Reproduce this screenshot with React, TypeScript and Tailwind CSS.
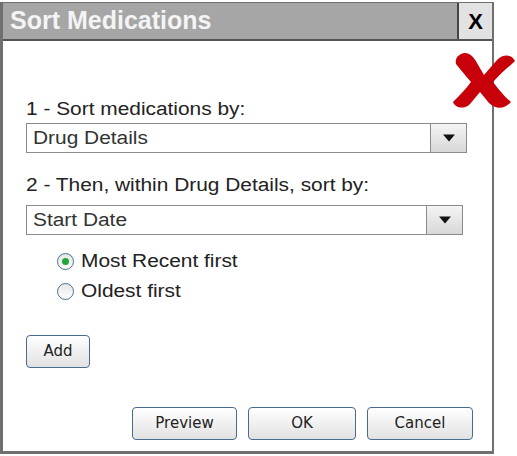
import React from 'react';

const font = { fontFamily: '"Liberation Sans", Arial, sans-serif' };

// the body text in the mock is a slightly widened Arial
const Wide = ({ children }: { children: React.ReactNode }) => (
  <span className="inline-block origin-left scale-x-[1.16] whitespace-nowrap">{children}</span>
);

const Select = ({ value, w }: { value: string; w: string }) => (
  <div className={`flex h-[30px] ${w} border border-[#8a8a8a] bg-white`}>
    <div className="flex flex-1 items-center pl-[6px] text-[18px] text-[#333]">
      <Wide>{value}</Wide>
    </div>
    <div className="flex w-[36px] items-center justify-center border-l border-[#8a8a8a] bg-gradient-to-b from-[#f4f4f4] to-[#d8d8d8]">
      <svg width="14" height="8" viewBox="0 0 14 8">
        <path d="M1 0.5 H13 L7 7.5 Z" fill="#111" />
      </svg>
    </div>
  </div>
);

const Radio = ({ checked, label }: { checked?: boolean; label: string }) => (
  <div className="flex h-[30px] items-center gap-[7px]">
    <div className="flex h-[17px] w-[17px] items-center justify-center rounded-full border border-[#4a6f8c] bg-gradient-to-b from-[#e6e6e6] to-white">
      {checked && <div className="h-[7px] w-[7px] rounded-full bg-[#22a83a]" />}
    </div>
    <span className="text-[18px] text-[#222]">
      <Wide>{label}</Wide>
    </span>
  </div>
);

const Btn = ({ label, w }: { label: string; w: string }) => (
  <button
    className={`${w} h-[33px] shrink-0 rounded-[4px] border border-[#4a6a8e] bg-gradient-to-b from-white to-[#e2e2e2] text-[15px] text-[#222]`}
    style={{ fontFamily: '"DejaVu Sans", Tahoma, sans-serif' }}
  >
    {label}
  </button>
);

export default function App() {
  return (
    <div className="relative h-[456px] w-[517px] bg-white" style={font}>
      <div className="mt-[2px] flex h-[452px] w-[494px] flex-col border-t border-r-2 border-b-[3px] border-l-[3px] border-[#6f6f6f] bg-white">
        <div className="flex h-[38px] shrink-0 border-b-2 border-[#555] bg-[#a6a6a6]">
          <div className="flex flex-1 items-center pl-[7px] text-[25px] font-bold text-[#f4f4f4]">Sort Medications</div>
          <div className="flex w-[35px] items-center justify-center border-l-2 border-[#444] bg-[#e2e2e2] text-[22px] font-bold text-black">
            X
          </div>
        </div>
        <div className="flex flex-1 flex-col pl-[23px]">
          <div className="mt-[57px] text-[18px] leading-[22px] text-[#222]">
            <Wide>1 - Sort medications by:</Wide>
          </div>
          <div className="mt-[3px]">
            <Select value="Drug Details" w="w-[441px]" />
          </div>
          <div className="mt-[21px] text-[18px] leading-[22px] text-[#222]">
            <Wide>2 - Then, within Drug Details, sort by:</Wide>
          </div>
          <div className="mt-[9px]">
            <Select value="Start Date" w="w-[437px]" />
          </div>
          <div className="mt-[11px] ml-[31px] flex flex-col">
            <Radio checked label="Most Recent first" />
            <Radio label="Oldest first" />
          </div>
          <div className="mt-[29px]">
            <Btn label="Add" w="w-[64px]" />
          </div>
          <div className="mt-[39px] flex gap-[11px] pl-[106px]">
            <Btn label="Preview" w="w-[105px]" />
            <Btn label="OK" w="w-[108px]" />
            <Btn label="Cancel" w="w-[106px]" />
          </div>
        </div>
      </div>
      <svg className="absolute left-[452px] top-[49px]" width="64" height="60" viewBox="0 0 64 60">
        <path
          d="M9 3 C16 0 21 5 25 12 L32 24 L45 9 C51 3 60 3 63 10 C58 15 50 21 41 31 C47 39 53 46 59 51 C53 58 44 59 37 52 L28 41 L18 53 C12 59 3 57 1 51 C7 45 13 39 19 31 C13 24 8 18 4 13 C3 8 5 5 9 3 Z"
          fill="#c8000a"
        />
      </svg>
    </div>
  );
}
